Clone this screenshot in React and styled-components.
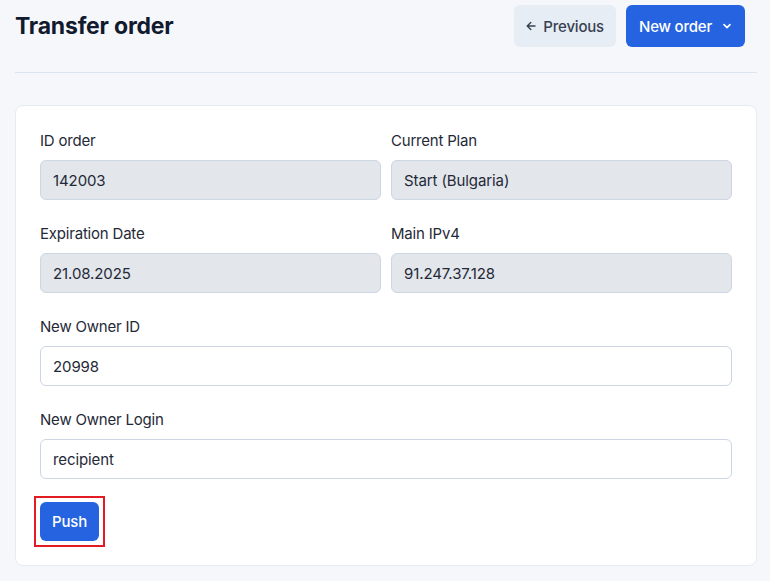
import styled, { createGlobalStyle } from "styled-components";

const GlobalStyle = createGlobalStyle`
  body {
    margin: 0;
    background: #f6f7fb;
    font-family: "Inter", "Liberation Sans", sans-serif;
    color: #1f2937;
  }
`;

const Page = styled.div`
  padding: 5px 13px 0 15px;
`;

const Header = styled.header`
  display: flex;
  align-items: center;
  justify-content: space-between;
  height: 42px;
  padding: 0 12px 25px 0;
  border-bottom: 1px solid #dbe4ef;
`;

const Title = styled.h1`
  margin: 0;
  font-size: 23px;
  font-weight: 700;
  color: #111a2e;
  letter-spacing: -0.2px;
`;

const Actions = styled.div`
  display: flex;
  gap: 10px;
`;

const Button = styled.button`
  display: inline-flex;
  align-items: center;
  gap: ${p => p.$gap || 8}px;
  height: ${p => p.$height || 42}px;
  padding: 0 ${p => p.$pad || 13}px;
  border: none;
  border-radius: 6px;
  font-family: inherit;
  font-size: 15px;
  font-weight: 500;
  letter-spacing: -0.2px;
  cursor: pointer;
  background: ${p => (p.$primary ? "#2563e0" : "#e7edf5")};
  color: ${p => (p.$primary ? "#ffffff" : "#374151")};
`;

const Card = styled.section`
  margin-top: 32px;
  background: #ffffff;
  border: 1px solid #e6eaf2;
  border-radius: 8px;
  padding: 24px;
`;

const Grid = styled.div`
  display: grid;
  grid-template-columns: 1fr 1fr;
  column-gap: 10px;
`;

const Field = styled.div`
  display: flex;
  flex-direction: column;
  gap: 8px;
  margin-bottom: 23px;
  grid-column: ${p => (p.$wide ? "1 / -1" : "auto")};
`;

const Label = styled.label`
  font-size: 15px;
  line-height: 22px;
  letter-spacing: -0.2px;
  color: #1f2937;
`;

const Input = styled.input`
  box-sizing: border-box;
  height: 40px;
  padding: 0 12px;
  border: 1px solid #cdd6e3;
  border-radius: 6px;
  font-family: inherit;
  font-size: 15px;
  letter-spacing: -0.1px;
  color: #1f2937;
  background: ${p => (p.disabled ? "#e3e6eb" : "#ffffff")};
  outline: none;

  &:disabled {
    color: #1f2937;
    -webkit-text-fill-color: #1f2937;
    opacity: 1;
  }
`;

const Highlight = styled.div`
  display: inline-flex;
  padding: 4px;
  margin: -6px 0 -6px -6px;
  border: 2px solid #e31b23;
`;

const ArrowLeft = () => (
  <svg width="10" height="10" viewBox="0 0 10 10" fill="none" stroke="currentColor" strokeWidth="1.4" strokeLinecap="round" strokeLinejoin="round">
    <path d="M9 5H1.2M4.8 1.4L1.2 5l3.6 3.6" />
  </svg>
);

const Chevron = () => (
  <svg width="10" height="10" viewBox="0 0 10 10" fill="none" stroke="currentColor" strokeWidth="1.6" strokeLinecap="round" strokeLinejoin="round">
    <path d="M2 3.6l3 3 3-3" />
  </svg>
);

const fields = [
  { label: "ID order", value: "142003", disabled: true },
  { label: "Current Plan", value: "Start (Bulgaria)", disabled: true },
  { label: "Expiration Date", value: "21.08.2025", disabled: true },
  { label: "Main IPv4", value: "91.247.37.128", disabled: true },
  { label: "New Owner ID", value: "20998", wide: true },
  { label: "New Owner Login", value: "recipient", wide: true },
];

export default function App() {
  return (
    <>
      <GlobalStyle />
      <Page>
        <Header>
          <Title>Transfer order</Title>
          <Actions>
            <Button $pad={12} $gap={7}>
              <ArrowLeft />
              Previous
            </Button>
            <Button $primary $pad={13} $gap={10}>
              New order
              <Chevron />
            </Button>
          </Actions>
        </Header>
        <Card>
          <Grid>
            {fields.map(f => (
              <Field key={f.label} $wide={f.wide}>
                <Label>{f.label}</Label>
                <Input defaultValue={f.value} disabled={f.disabled} />
              </Field>
            ))}
          </Grid>
          <Highlight>
            <Button $primary $height={39} $pad={12}>Push</Button>
          </Highlight>
        </Card>
      </Page>
    </>
  );
}
